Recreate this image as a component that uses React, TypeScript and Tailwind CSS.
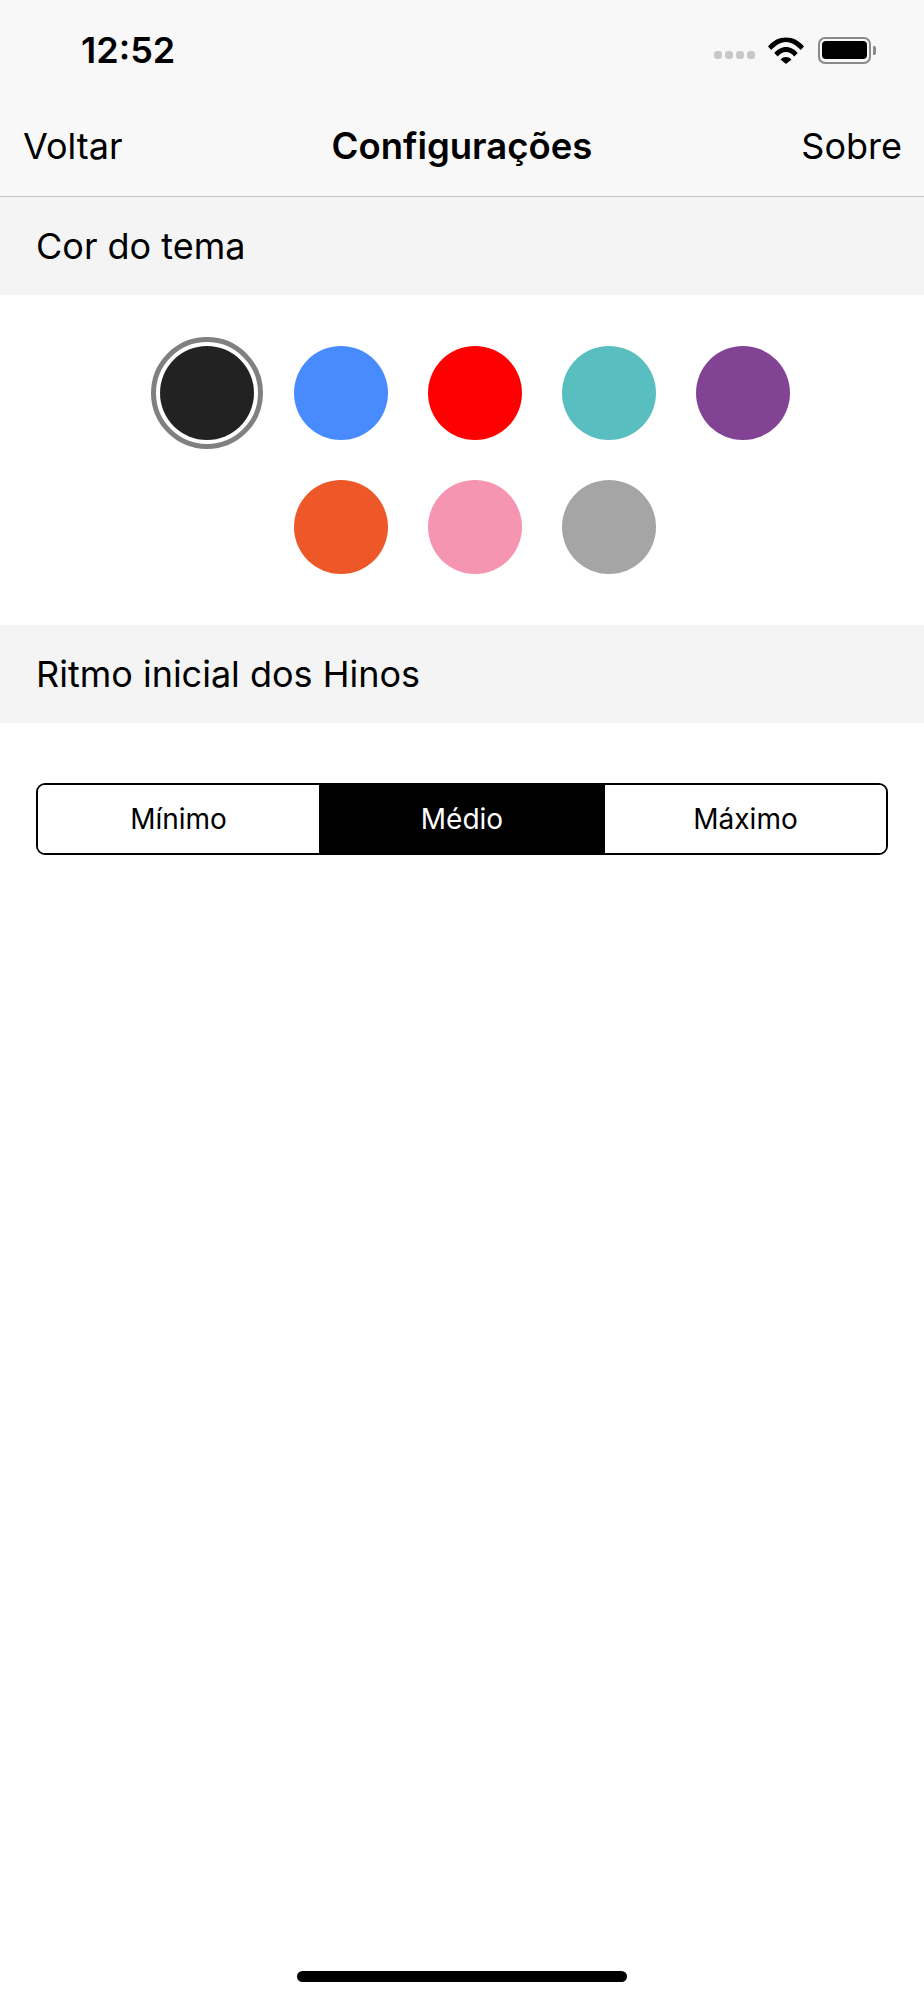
import React, { useState } from "react";

const COLORS = [
  "#222222",
  "#488bff",
  "#ff0000",
  "#59bec0",
  "#834394",
  "#ee5728",
  "#f595b2",
  "#a5a5a5",
];

const RHYTHMS = ["Mínimo", "Médio", "Máximo"];

function StatusBar() {
  return (
    <div className="flex h-[100px] items-center justify-between pl-[81px] pr-[48px]">
      <span className="text-[36px] font-semibold leading-none">12:52</span>
      <div className="flex items-center">
        {/* signal dots */}
        <div className="mt-[10px] mr-[13px] flex gap-[3px]">
          <span className="h-[8px] w-[8px] rounded-[3px] bg-[#c8c8c8]" />
          <span className="h-[8px] w-[8px] rounded-[3px] bg-[#c8c8c8]" />
          <span className="h-[8px] w-[8px] rounded-[3px] bg-[#c8c8c8]" />
          <span className="h-[8px] w-[8px] rounded-[3px] bg-[#c8c8c8]" />
        </div>
        {/* wifi */}
        <svg width="36" height="27" viewBox="0 0 36 27" className="mr-[14px]">
          <path d="M0 9.5C4.5 3.8 11 0.5 18 0.5s13.500 3.300 18 9l-3.300 3.500C29 9.200 23.800 5 18 5S7 9.200 3.300 13z" fill="#000" />
          <path d="M6.300 16C9.300 12.400 13.500 10 18 10s8.700 2.400 11.700 6l-3.400 3.500C24.200 16.800 21.200 15 18 15s-6.200 1.800-8.300 4.500z" fill="#000" />
          <path d="M12.500 22.500C14 20.800 15.900 20 18 20s4 .8 5.500 2.500L18 27z" fill="#000" />
        </svg>
        {/* battery */}
        <div className="flex items-center">
          <div className="flex h-[27px] w-[53px] items-center justify-center rounded-[7px] border-[2px] border-[#8a8a8a]">
            <div className="h-[18px] w-[45px] rounded-[4px] bg-black" />
          </div>
          <div className="ml-[2px] h-[9px] w-[3px] rounded-r-[2px] bg-[#8a8a8a]" />
        </div>
      </div>
    </div>
  );
}

function SectionTitle({ title }: { title: string }) {
  return (
    <div className="flex h-[98px] items-center bg-[#f4f4f4] pl-[36px] text-[36px] leading-none">
      {title}
    </div>
  );
}

export default function App() {
  const [color, setColor] = useState(0);
  const [rhythm, setRhythm] = useState(1);

  return (
    <div className="relative h-[2000px] w-[924px] bg-white text-black font-['Inter',sans-serif]">
      <div className="border-b-[1px] border-[#c4c4c4] bg-[#f8f8f8]">
        <StatusBar />
        <div className="flex h-[96px] items-center justify-between pl-[23px] pr-[22px] pb-[4px] text-[36px] leading-none">
          <span>Voltar</span>
          <span className="text-[36.500px] font-semibold">Configurações</span>
          <span>Sobre</span>
        </div>
      </div>

      <SectionTitle title="Cor do tema" />
      <div className="py-[51px]">
        <div className="ml-[160px] flex w-[630px] flex-wrap justify-center gap-[40px]">
          {COLORS.map((c, i) => (
            <button
              key={c}
              onClick={() => setColor(i)}
              className="relative h-[94px] w-[94px] rounded-full"
              style={{ backgroundColor: c }}
            >
              {i === color && (
                <span className="absolute -inset-[9px] rounded-full border-[5px] border-[#808080]" />
              )}
            </button>
          ))}
        </div>
      </div>

      <SectionTitle title="Ritmo inicial dos Hinos" />
      <div className="px-[36px] pt-[60px]">
        <div className="flex h-[72px] overflow-hidden rounded-[9px] border-[2px] border-black">
          {RHYTHMS.map((r, i) => (
            <button
              key={r}
              onClick={() => setRhythm(i)}
              className={`flex items-center justify-center text-[28px] ${
                i === 1 ? "w-[286px]" : "flex-1"
              } ${i === rhythm ? "bg-black text-white" : "bg-white text-black"}`}
            >
              {r}
            </button>
          ))}
        </div>
      </div>

      {/* home indicator */}
      <div className="absolute bottom-[18px] left-[297px] h-[11px] w-[330px] rounded-full bg-black" />
    </div>
  );
}
